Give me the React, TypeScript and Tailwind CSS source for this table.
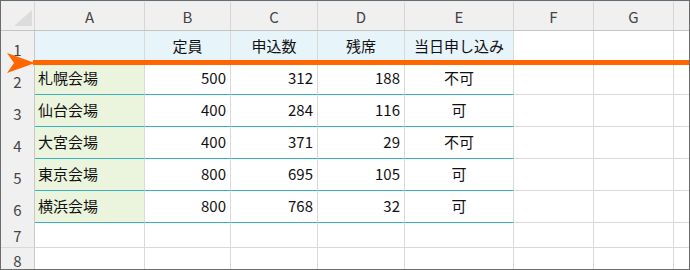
import React from 'react';

const cols = [
  { key: 'A', w: 'w-[110px]' },
  { key: 'B', w: 'w-[86px]' },
  { key: 'C', w: 'w-[87px]' },
  { key: 'D', w: 'w-[87px]' },
  { key: 'E', w: 'w-[109px]' },
  { key: 'F', w: 'w-[80px]' },
  { key: 'G', w: 'w-[80px]' },
];

const rows = [
  ['札幌会場', '500', '312', '188', '不可'],
  ['仙台会場', '400', '284', '116', '可'],
  ['大宮会場', '400', '371', '29', '不可'],
  ['東京会場', '800', '695', '105', '可'],
  ['横浜会場', '800', '768', '32', '可'],
];

const headings = ['', '定員', '申込数', '残席', '当日申し込み'];

const font = { fontFamily: '"Noto Sans CJK JP", "Noto Sans", sans-serif' };

const RowNum: React.FC<{ n: number }> = ({ n }) => (
  <div className="w-[34px] shrink-0 bg-[#f0f0f0] border-r border-[#c8c8c8] flex items-center justify-center text-[15px] text-[#444] pt-1">
    {n}
  </div>
);

const App: React.FC = () => {
  return (
    <div
      className="w-[690px] h-[270px] border border-[#6b6b6b] bg-white overflow-hidden relative text-[15px] text-[#111] leading-none"
      style={font}
    >
      {/* column headers */}
      <div className="flex h-[30px] border-t border-[#e3eef5] border-b border-b-[#c4c4c4] bg-[#f0f0f0]">
        <div className="w-[34px] shrink-0 border-r border-[#d6d6d6] relative">
          <svg className="absolute left-[13px] top-[8px]" width="19" height="17" viewBox="0 0 19 17">
            <polygon points="0,16 18,0 18,16" fill="#dcdcdc" />
          </svg>
        </div>
        {cols.map((c) => (
          <div key={c.key} className={`${c.w} shrink-0 border-r border-[#d6d6d6] flex items-center justify-center text-[#444]`}>
            {c.key}
          </div>
        ))}
        <div className="flex-1" />
      </div>

      {/* row 1: table headings */}
      <div className="flex h-[32px]">
        <RowNum n={1} />
        {headings.map((h, i) => (
          <div
            key={i}
            className={`${cols[i].w} shrink-0 bg-[#e7f4fa] border-r border-[#d9d9d9] border-b border-b-[#3aafbf] flex items-center justify-center pb-[2px]`}
          >
            {h}
          </div>
        ))}
        <div className="w-[80px] shrink-0 border-r border-b border-[#d9d9d9]" />
        <div className="w-[80px] shrink-0 border-r border-b border-[#d9d9d9]" />
        <div className="flex-1 border-b border-[#d9d9d9]" />
      </div>

      {/* data rows */}
      {rows.map((r, ri) => (
        <div key={ri} className="flex h-[32px]">
          <RowNum n={ri + 2} />
          <div className="w-[110px] shrink-0 bg-[#ebf5dd] border-r border-[#d9d9d9] border-b border-b-[#3aafbf] flex items-center pl-[3px] pb-[2px]">
            {r[0]}
          </div>
          <div className="w-[86px] shrink-0 border-r border-[#d9d9d9] border-b border-b-[#3aafbf] flex items-center justify-end pr-[4px] pb-[2px]">
            {r[1]}
          </div>
          <div className="w-[87px] shrink-0 border-r border-[#d9d9d9] border-b border-b-[#3aafbf] flex items-center justify-end pr-[4px] pb-[2px]">
            {r[2]}
          </div>
          <div className="w-[87px] shrink-0 border-r border-[#d9d9d9] border-b border-b-[#3aafbf] flex items-center justify-end pr-[4px] pb-[2px]">
            {r[3]}
          </div>
          <div className="w-[109px] shrink-0 border-r border-[#d9d9d9] border-b border-b-[#3aafbf] flex items-center justify-center pb-[2px]">
            {r[4]}
          </div>
          <div className="w-[80px] shrink-0 border-r border-b border-[#d9d9d9]" />
          <div className="w-[80px] shrink-0 border-r border-b border-[#d9d9d9]" />
          <div className="flex-1 border-b border-[#d9d9d9]" />
        </div>
      ))}

      {/* empty rows */}
      {[7, 8].map((n) => (
        <div key={n} className="flex h-[25px]">
          <div className="w-[34px] shrink-0 bg-[#f0f0f0] border-r border-[#c8c8c8] border-b border-b-[#d9d9d9] flex items-center justify-center text-[15px] text-[#444]">
            {n}
          </div>
          {cols.map((c) => (
            <div key={c.key} className={`${c.w} shrink-0 border-r border-b border-[#d9d9d9]`} />
          ))}
          <div className="flex-1 border-b border-[#d9d9d9]" />
        </div>
      ))}

      {/* orange marker line */}
      <div className="absolute left-[32px] right-0 top-[59px] h-[5px] bg-[#ff6600]" />
      <svg className="absolute left-[6px] top-[52px]" width="28" height="20" viewBox="0 0 28 20">
        <polygon points="0,0 28,10 0,20 7,10" fill="#ff6600" />
      </svg>
    </div>
  );
};

export default App;
